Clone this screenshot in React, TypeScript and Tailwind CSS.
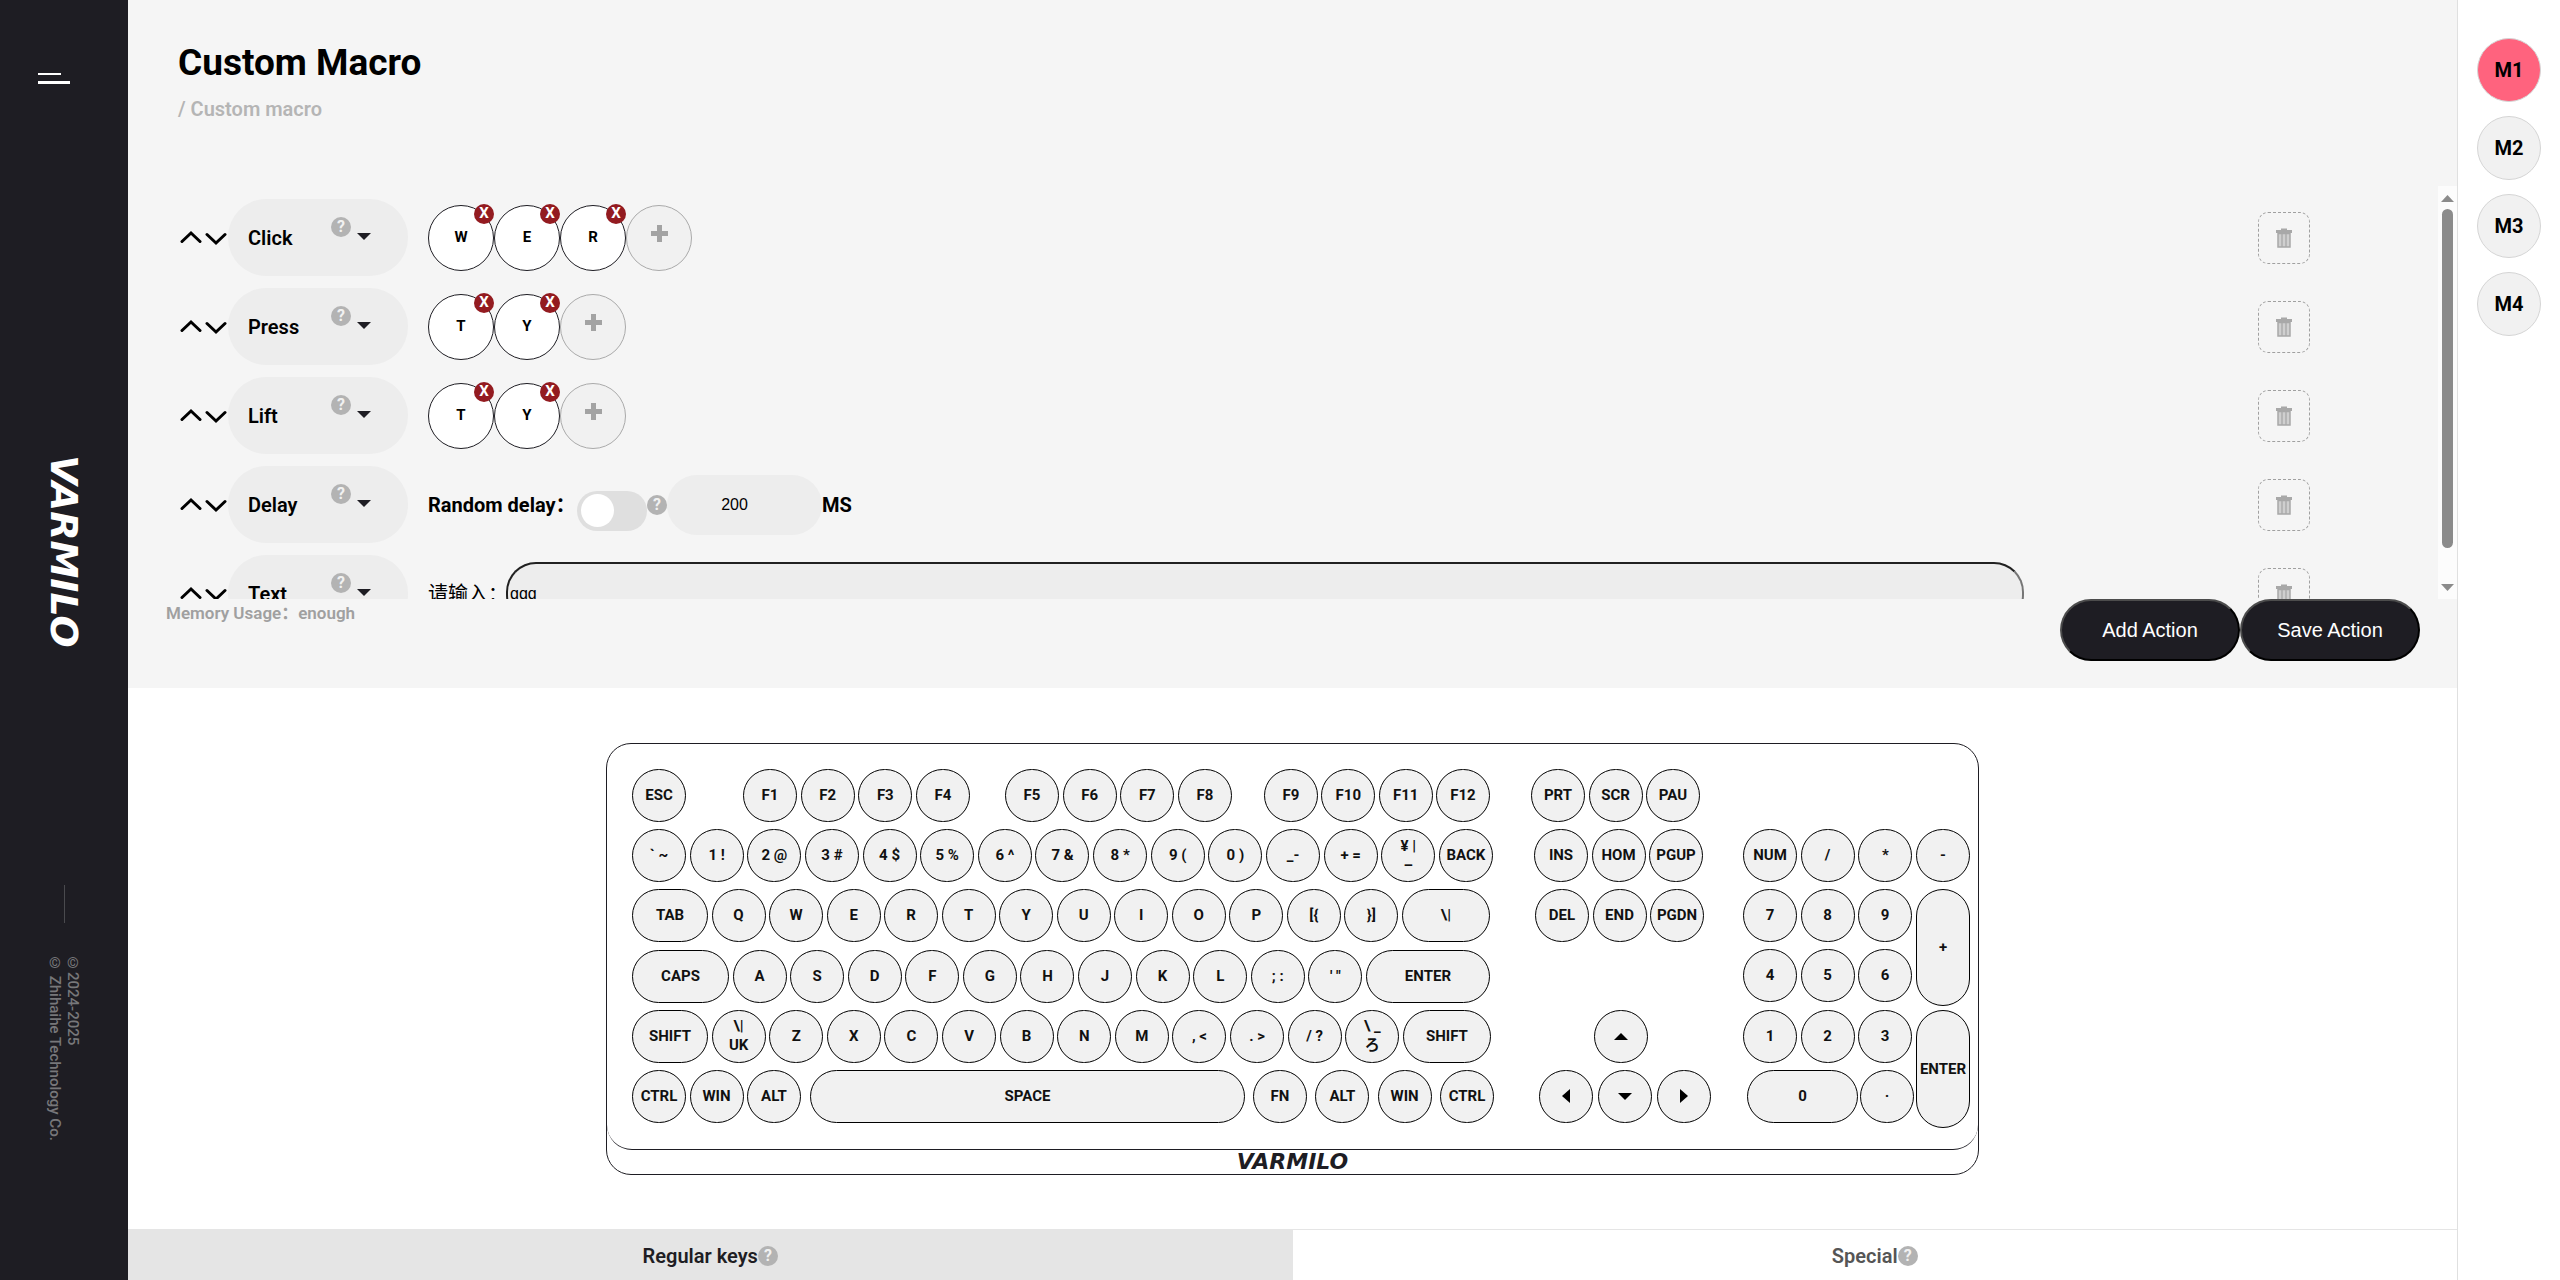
import { useState } from 'react';
import clsx from 'clsx';

const SLOTS = ['M1', 'M2', 'M3', 'M4'];
const ACTIONS = ['Click', 'Press', 'Lift', 'Delay', 'Text'];

type Step = { action: string; keys?: string[]; delay?: number; text?: string };

const STEPS: Step[] = [
  { action: 'Click', keys: ['W', 'E', 'R'] },
  { action: 'Press', keys: ['T', 'Y'] },
  { action: 'Lift', keys: ['T', 'Y'] },
  { action: 'Delay', delay: 200 },
  { action: 'Text', text: 'qqq' },
];

// clusters of keys, each one spread evenly over its own width
type Cluster = { box: string; keys: string[] };

const ROWS: Cluster[][] = [
  [
    { box: 'w-[54px]', keys: ['ESC'] },
    { box: 'ml-[57px] w-[227px]', keys: ['F1', 'F2', 'F3', 'F4'] },
    { box: 'ml-[35px] w-[227px]', keys: ['F5', 'F6', 'F7', 'F8'] },
    { box: 'ml-[32px] w-[226px]', keys: ['F9', 'F10', 'F11', 'F12'] },
    { box: 'ml-[41px] w-[169px]', keys: ['PRT', 'SCR', 'PAU'] },
  ],
  [
    {
      box: 'w-[861px]',
      keys: ['` ~', '1 !', '2 @', '3 #', '4 $', '5 %', '6 ^', '7 &', '8 *', '9 (', '0 )', '_-', '+ =', '¥ |\n–', 'BACK'],
    },
    { box: 'ml-[41px] w-[169px]', keys: ['INS', 'HOM', 'PGUP'] },
  ],
  [
    { box: 'w-[858px]', keys: ['TAB', 'Q', 'W', 'E', 'R', 'T', 'Y', 'U', 'I', 'O', 'P', '[{', '}]', '\\|'] },
    { box: 'ml-[45px] w-[169px]', keys: ['DEL', 'END', 'PGDN'] },
  ],
  [{ box: 'w-[858px]', keys: ['CAPS', 'A', 'S', 'D', 'F', 'G', 'H', 'J', 'K', 'L', '; :', '′ ″', 'ENTER'] }],
  [
    {
      box: 'w-[859px]',
      keys: ['SHIFT', '\\|\nUK', 'Z', 'X', 'C', 'V', 'B', 'N', 'M', ', <', '. >', '/ ?', '\\ _\nろ', 'SHIFT '],
    },
    { box: 'ml-[103px] w-[54px]', keys: ['up'] },
  ],
  [
    { box: 'w-[169px]', keys: ['CTRL', 'WIN', 'ALT'] },
    { box: 'ml-[9px] w-[435px]', keys: ['SPACE'] },
    { box: 'ml-[8px] w-[241px]', keys: ['FN', 'ALT', 'WIN', 'CTRL'] },
    { box: 'ml-[45px] w-[172px]', keys: ['left', 'down', 'right'] },
  ],
];

const NUMPAD: Cluster[] = [
  { box: 'w-[169px]', keys: ['7', '8', '9'] },
  { box: 'w-[169px]', keys: ['4', '5', '6'] },
  { box: 'w-[169px]', keys: ['1', '2', '3'] },
  { box: 'ml-1 w-[167px]', keys: ['0', '·'] },
];

const KEY_SIZE: Record<string, string> = {
  TAB: 'w-[76px]',
  '\\|': 'w-[88px]',
  CAPS: 'w-[97px]',
  ENTER: 'w-[124px]',
  SHIFT: 'w-[76px]',
  'SHIFT ': 'w-[88px]',
  SPACE: 'w-[435px]',
  '0': 'w-[111px]',
};

const ARROWS: Record<string, string> = {
  up: 'M0 11 7 4l7 7z',
  down: 'M0 4h14L7 11z',
  left: 'M11 0v14L3 7z',
  right: 'M3 0v14l8-7z',
};

function Key({ label, size = 'h-[53px]' }: { label: string; size?: string }) {
  return (
    <button
      aria-label={label.trim()}
      className={clsx(
        'flex shrink-0 items-center justify-center rounded-[27px] border border-black bg-[#f1f1f1] text-[15px] leading-[19px] font-bold whitespace-pre text-[#111]',
        size,
        KEY_SIZE[size === 'h-[53px]' ? label : ''] ?? 'w-[54px]',
      )}
    >
      {ARROWS[label] ? (
        <svg viewBox="0 0 14 14" className="size-[14px]" fill="#000">
          <path d={ARROWS[label]} />
        </svg>
      ) : (
        label.trim()
      )}
    </button>
  );
}

function KeyCluster({ box, keys }: Cluster) {
  return (
    <div className={clsx('flex shrink-0 justify-between', box)}>
      {keys.map((k, i) => (
        <Key key={i} label={k} />
      ))}
    </div>
  );
}

function Help({ className }: { className?: string }) {
  return (
    <span
      className={clsx(
        'flex size-5 shrink-0 items-center justify-center rounded-full bg-[#b3b3b3] text-base font-bold text-[#f1f1f1]',
        className,
      )}
    >
      ?
    </span>
  );
}

function Wordmark({ className }: { className: string }) {
  return <span className={clsx("font-['DejaVu_Sans',sans-serif] font-bold italic", className)}>VARMILO</span>;
}

function MoveButtons() {
  return (
    <div className="flex gap-[3px]">
      <button aria-label="Move up">
        <svg viewBox="0 0 22 16" className="h-4 w-[22px]" fill="none" stroke="#000" strokeWidth="3" strokeLinecap="round">
          <path d="M2 11.5 11 3l9 8.5" />
        </svg>
      </button>
      <button aria-label="Move down">
        <svg viewBox="0 0 22 16" className="h-4 w-[22px]" fill="none" stroke="#000" strokeWidth="3" strokeLinecap="round">
          <path d="M2 4.5 11 13l9-8.5" />
        </svg>
      </button>
    </div>
  );
}

function ActionSelect({ value }: { value: string }) {
  return (
    <div className="relative ml-px">
      <select
        aria-label="Action"
        defaultValue={value}
        className="h-[77px] w-[180px] appearance-none rounded-[38px] bg-[#ededed] pl-5 text-xl font-semibold text-black"
      >
        {ACTIONS.map((a) => (
          <option key={a}>{a}</option>
        ))}
      </select>
      <Help className="pointer-events-none absolute top-[18px] right-[57px]" />
      <svg viewBox="0 0 14 7" className="pointer-events-none absolute top-[34px] right-[37px] h-[7px] w-[14px]" fill="#1e1d23">
        <path d="M0 0h14L7 7z" />
      </svg>
    </div>
  );
}

function KeyChips({ keys }: { keys: string[] }) {
  return (
    <div className="flex">
      {keys.map((k) => (
        <div
          key={k}
          className="relative flex size-[66px] items-center justify-center rounded-full border border-[#1e1d23] bg-white text-[15px] font-bold"
        >
          {k}
          <button
            aria-label={`Remove ${k}`}
            className="absolute -top-[2px] -right-px flex size-5 items-center justify-center rounded-full bg-[#931b20] text-[15px] font-bold text-white"
          >
            X
          </button>
        </div>
      ))}
      <button
        aria-label="Add key"
        className="flex size-[66px] items-center justify-center rounded-full border border-[#aaa] bg-[#f1f1f1] pb-2"
      >
        <svg viewBox="0 0 17 17" className="size-[17px]" fill="#a3a3a3">
          <path d="M6 0h5v6h6v5h-6v6H6v-6H0V6h6z" />
        </svg>
      </button>
    </div>
  );
}

function DelayFields({ value }: { value: number }) {
  return (
    <div className="flex items-center text-xl font-bold">
      <label htmlFor="random" className="w-[149px] whitespace-nowrap">
        Random delay：
      </label>
      <input
        id="random"
        type="checkbox"
        className="mt-3 h-10 w-[70px] appearance-none rounded-full bg-[#dfdfdf] px-1 pt-[3px] before:block before:size-[33px] before:rounded-full before:bg-white"
      />
      <Help />
      <input
        aria-label="Delay in milliseconds"
        defaultValue={value}
        className="h-[60px] w-[155px] rounded-[30px] bg-[#ededed] pr-5 text-center font-['Liberation_Sans',sans-serif] text-base font-normal"
      />
      <span>MS</span>
    </div>
  );
}

function TextField({ value }: { value: string }) {
  return (
    <div className="flex flex-1 items-center pr-[234px]">
      <label htmlFor="macro-text" className="w-[78px] text-xl whitespace-nowrap">
        请输入：
      </label>
      <input
        id="macro-text"
        defaultValue={value}
        className="h-[63px] flex-1 rounded-[30px] border-2 border-[#767676] border-t-[#212121] border-l-[#212121] bg-[#ededed] px-[2px] font-['Liberation_Sans',sans-serif] text-base"
      />
    </div>
  );
}

function TrashIcon() {
  return (
    <svg viewBox="0 0 16 20" className="h-5 w-4">
      <path d="M5 2V.5h6V2h5v3H0V2z" fill="#a8a8a8" />
      <path d="M2 5.5h12V19H2z" fill="#cfcfcf" stroke="#a8a8a8" strokeWidth="1.5" />
      <path d="M6 5v14M10 5v14" stroke="#a8a8a8" strokeWidth="1.3" />
    </svg>
  );
}

function StepRow({ step }: { step: Step }) {
  return (
    <div className="flex h-[77px] shrink-0 items-center">
      <MoveButtons />
      <ActionSelect value={step.action} />
      <div className="ml-5 flex flex-1">
        {step.keys && <KeyChips keys={step.keys} />}
        {step.delay !== undefined && <DelayFields value={step.delay} />}
        {step.text !== undefined && <TextField value={step.text} />}
      </div>
      <button
        aria-label="Delete step"
        className="flex size-[52px] items-center justify-center rounded-[10px] border border-dashed border-[#a0a0a0]"
      >
        <TrashIcon />
      </button>
    </div>
  );
}

function Scrollbar() {
  return (
    <div className="flex w-[19px] flex-col items-center bg-[#fcfcfc] pt-[9px] pb-2">
      <svg viewBox="0 0 13 7" className="h-[7px] w-[13px]" fill="#8b8b8b">
        <path d="M0 7h13L6.5 0z" />
      </svg>
      <div className="mt-[7px] mb-9 w-[11px] flex-1 rounded-full bg-[#8b8b8b]" />
      <svg viewBox="0 0 13 7" className="h-[7px] w-[13px]" fill="#8b8b8b">
        <path d="M0 0h13L6.5 7z" />
      </svg>
    </div>
  );
}

function Sidebar() {
  return (
    <aside className="flex w-32 shrink-0 flex-col items-center bg-[#1e1d23] pt-[73px]">
      <button aria-label="Menu" className="mr-5 flex w-8 flex-col gap-[6px]">
        <span className="h-[2px] w-[23px] bg-white" />
        <span className="h-[3px] w-8 bg-white" />
      </button>
      <div className="mt-[356px] flex h-[222px] items-center justify-center [writing-mode:vertical-rl]">
        <Wordmark className="text-[38px] leading-none text-white" />
      </div>
      <div className="mt-[223px] h-[38px] w-px bg-[#4a4a4e]" />
      <p className="mt-[31px] text-[15px] leading-[18px] font-medium text-[#77777a] [writing-mode:vertical-rl]">
        ©2024-2025
        <br />© Zhihaihe Technology Co.
      </p>
    </aside>
  );
}

function Keyboard() {
  return (
    <div className="w-[1373px] rounded-[25px] border border-[#1e1d23]">
      <div className="flex h-[406px] items-start rounded-b-[25px] border-b border-[#1e1d23] pt-[25px] pl-[25px]">
        <div className="flex h-[354px] w-[1111px] flex-col justify-between">
          {ROWS.map((row, i) => (
            <div key={i} className="flex">
              {row.map((c, j) => (
                <KeyCluster key={j} {...c} />
              ))}
            </div>
          ))}
        </div>
        <div className="mt-[60px]">
          <KeyCluster box="w-[227px]" keys={['NUM', '/', '*', '-']} />
          <div className="mt-[7px] flex items-start justify-between">
            <div className="flex h-[234px] flex-col justify-between">
              {NUMPAD.map((c, i) => (
                <KeyCluster key={i} {...c} />
              ))}
            </div>
            <div className="flex flex-col gap-1">
              <Key label="+" size="h-[117px]" />
              <Key label="ENTER" size="h-[118px]" />
            </div>
          </div>
        </div>
      </div>
      <div className="flex h-6 items-center justify-center">
        <Wordmark className="text-[22px] leading-none text-[#1e1d23]" />
      </div>
    </div>
  );
}

export default function App() {
  const [slot, setSlot] = useState('M1');
  const [tab, setTab] = useState('Regular keys');

  return (
    <div className="flex min-h-screen bg-white font-[Roboto,'Noto_Sans_CJK_SC',sans-serif] text-black">
      <Sidebar />

      <main className="flex min-w-0 flex-1 flex-col">
        <section className="bg-[#f5f5f5]">
          <header className="px-[50px] pt-10 pb-[65px]">
            <h1 className="text-[37px] leading-[46px] font-bold">Custom Macro</h1>
            <p className="mt-[11px] text-xl leading-6 font-semibold text-[#b5b5b5]">/ Custom macro</p>
          </header>

          <div className="flex h-[413px] overflow-hidden">
            <div className="flex flex-1 flex-col gap-3 pt-[13px] pr-32 pl-[52px]">
              {STEPS.map((s) => (
                <StepRow key={s.action} step={s} />
              ))}
            </div>
            <Scrollbar />
          </div>

          <div className="flex items-start justify-between pr-[37px] pb-[27px] pl-[38px]">
            <p className="pt-[2px] text-[17px] leading-6 font-semibold text-[#a0a0a0]">Memory Usage：enough</p>
            <div className="flex">
              {['Add Action', 'Save Action'].map((t) => (
                <button
                  key={t}
                  className="h-[62px] w-[180px] rounded-full border-2 border-t-[#4c4c4c] border-r-black border-b-black border-l-[#4c4c4c] bg-[#1e1d23] font-['Liberation_Sans',sans-serif] text-xl text-white"
                >
                  {t}
                </button>
              ))}
            </div>
          </div>
        </section>

        <section className="flex flex-1 justify-center pt-[55px] pb-[54px]">
          <Keyboard />
        </section>

        <nav className="flex h-[51px] border-t border-[#e5e5e5]">
          {['Regular keys', 'Special'].map((t) => (
            <button
              key={t}
              onClick={() => setTab(t)}
              className={clsx(
                'flex flex-1 items-center justify-center pt-[2px] text-xl font-semibold',
                tab === t ? 'bg-[#e5e5e5] text-[#1e1d23]' : 'text-[#555]',
              )}
            >
              {t}
              <Help />
            </button>
          ))}
        </nav>
      </main>

      <aside className="flex w-[103px] shrink-0 flex-col items-center gap-[14px] border-l border-[#e0e0e0] pt-[38px]">
        {SLOTS.map((s) => (
          <button
            key={s}
            onClick={() => setSlot(s)}
            className={clsx(
              'size-16 rounded-full border border-[#d5d5d5] text-xl font-bold',
              slot === s ? 'bg-[#ff637e]' : 'bg-[#f1f1f1]',
            )}
          >
            {s}
          </button>
        ))}
      </aside>
    </div>
  );
}
